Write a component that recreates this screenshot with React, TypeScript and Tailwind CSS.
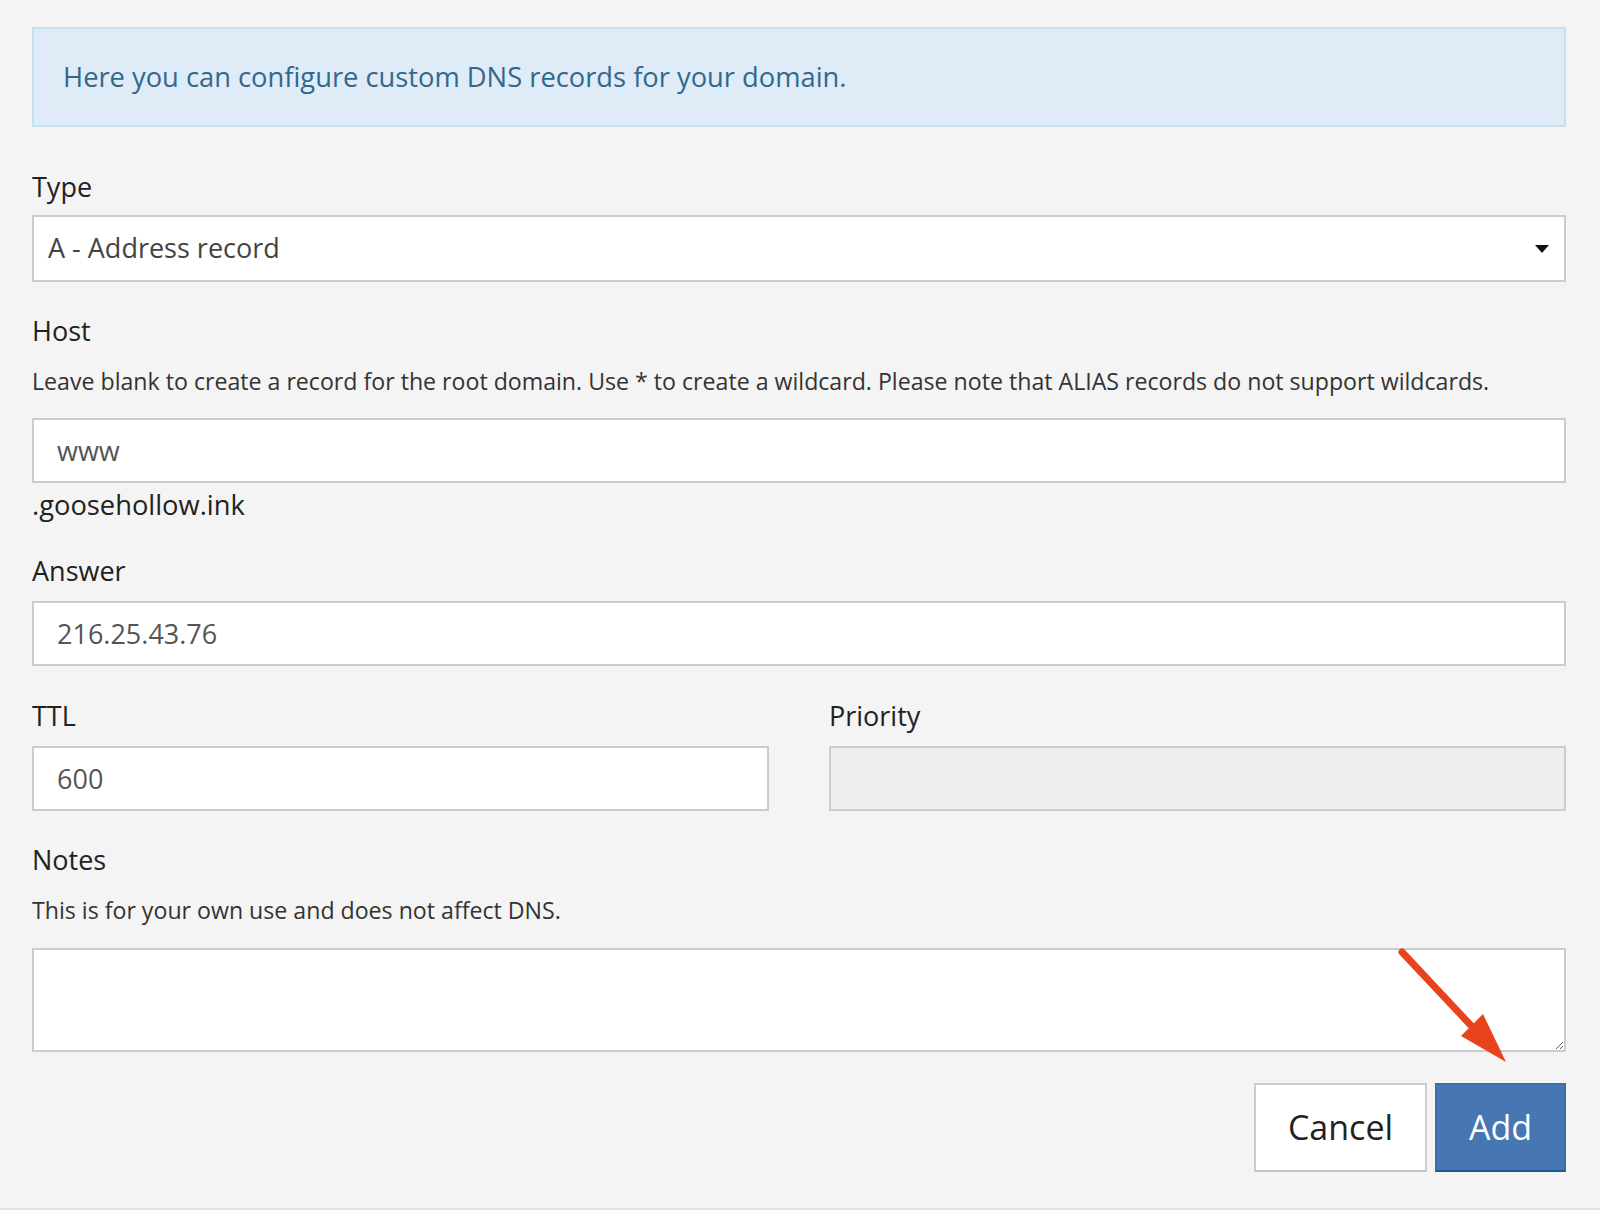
import React from 'react';

const font = { fontFamily: '"Open Sans", "Noto Sans", sans-serif' };

function FieldLabel({ children, className = '' }: { children: React.ReactNode; className?: string }) {
  return <div className={`text-[27px] leading-[38px] text-[#222] ${className}`}>{children}</div>;
}

function HelpText({ children, className = '' }: { children: React.ReactNode; className?: string }) {
  return <div className={`text-[23.15px] leading-[32px] text-[#333] ${className}`}>{children}</div>;
}

function TextBox({ value, disabled = false }: { value?: string; disabled?: boolean }) {
  return (
    <input
      readOnly
      value={value ?? ''}
      disabled={disabled}
      className={`block w-full h-[65px] border-2 border-[#cccccc] px-[23px] text-[27px] text-[#555] outline-none ${
        disabled ? 'bg-[#eeeeee]' : 'bg-white'
      }`}
      style={font}
    />
  );
}

export default function App() {
  return (
    <div className="min-h-[1215px] bg-white" style={font}>
      <div className="relative bg-[#f4f4f4] px-[32px] pt-[27px] pb-[36px] border-b-2 border-[#e3e3e3] w-[1600px]">
        {/* Info alert */}
        <div className="h-[100px] w-[1534px] border-2 border-[#c3e2ee] bg-[#dfebf6] flex items-center px-[29px]">
          <span className="text-[27.3px] text-[#31698d]">Here you can configure custom DNS records for your domain.</span>
        </div>

        <div className="w-[1534px]">
          {/* Type */}
          <FieldLabel className="mt-[41px] mb-[9px]">Type</FieldLabel>
          <div className="h-[67px] border-2 border-[#cccccc] bg-white flex items-center justify-between pl-[14px] pr-[15px]">
            <span className="text-[27px] text-[#444]">A - Address record</span>
            <svg width="14" height="8" viewBox="0 0 14 8">
              <path d="M0 0 H14 L7 8 Z" fill="#111" />
            </svg>
          </div>

          {/* Host */}
          <FieldLabel className="mt-[30px]">Host</FieldLabel>
          <HelpText className="mt-[15px] mb-[21px]">
            Leave blank to create a record for the root domain. Use * to create a wildcard. Please note that ALIAS records do not support wildcards.
          </HelpText>
          <TextBox value="www" />
          <div className="mt-[3px] text-[27.3px] leading-[38px] text-[#222]">.goosehollow.ink</div>

          {/* Answer */}
          <FieldLabel className="mt-[28px] mb-[11px]">Answer</FieldLabel>
          <TextBox value="216.25.43.76" />

          {/* TTL / Priority */}
          <div className="grid grid-cols-2 gap-x-[60px] mt-[31px]">
            <div>
              <FieldLabel className="mb-[11px]">TTL</FieldLabel>
              <TextBox value="600" />
            </div>
            <div>
              <FieldLabel className="mb-[11px]">Priority</FieldLabel>
              <TextBox disabled />
            </div>
          </div>

          {/* Notes */}
          <FieldLabel className="mt-[30px]">Notes</FieldLabel>
          <HelpText className="mt-[15px] mb-[22px]">This is for your own use and does not affect DNS.</HelpText>
          <textarea
            readOnly
            className="block w-full h-[104px] border-2 border-[#cccccc] bg-white outline-none resize-y"
          />

          {/* Actions */}
          <div className="flex justify-end gap-[8px] mt-[31px]">
            <button className="h-[89px] w-[173px] border-2 border-[#cccccc] border-b-[#c4c4c4] bg-white text-[34px] text-[#222]" style={font}>
              Cancel
            </button>
            <button className="h-[89px] w-[131px] border-2 border-[#3a6ead] border-b-[#1f5896] bg-[#4677b2] text-[34px] text-white" style={font}>
              Add
            </button>
          </div>
        </div>

        {/* annotation arrow */}
        <svg className="absolute left-0 top-0 pointer-events-none" width="1600" height="1215">
          <line x1="1402" y1="952" x2="1478" y2="1033" stroke="#e8431d" strokeWidth="7" strokeLinecap="round" />
          <polygon points="1506,1062 1461,1036 1483,1014" fill="#e8431d" />
        </svg>
      </div>
    </div>
  );
}
